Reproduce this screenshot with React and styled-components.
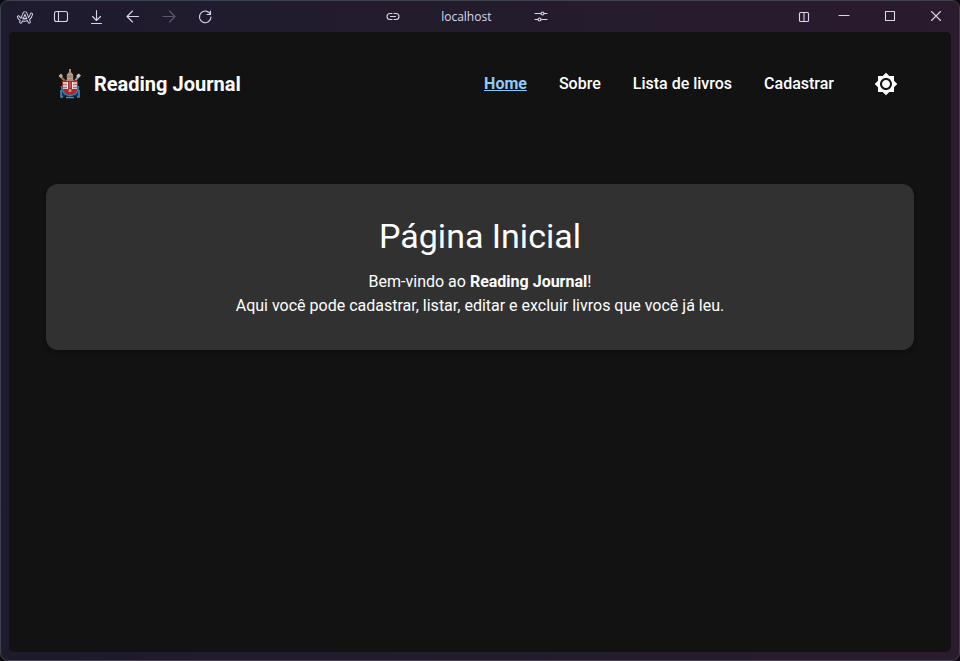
import React from "react";
import styled, { createGlobalStyle, css } from "styled-components";

const GlobalStyle = createGlobalStyle`
  *, *::before, *::after { box-sizing: border-box; }
  body {
    margin: 0;
    background: #0b0b10;
    color: #fff;
    font-family: Roboto, "Liberation Sans", sans-serif;
    font-size: 16px;
    line-height: 24px;
  }
`;

const BrowserWindow = styled.div`
  min-height: 100vh;
  display: flex;
  flex-direction: column;
  border: 1px solid #3c434d;
  border-radius: 8px;
  background: linear-gradient(90deg, #1e1b2e 0%, #231c2d 50%, #2a1b2d 100%);
`;

const TitleBar = styled.div`
  display: grid;
  grid-template-columns: 11fr 184px 12fr;
  align-items: center;
  height: 31px;
  padding-left: 6px;
`;

const Tools = styled.div`
  display: flex;
  align-items: center;
  justify-content: ${({ $align }) => $align || "flex-start"};
`;

const ChromeButton = styled.button`
  display: flex;
  align-items: center;
  justify-content: center;
  width: ${({ $wide }) => ($wide ? "46px" : "36px")};
  height: 30px;
  padding: 0;
  border: 0;
  background: none;
  color: ${({ disabled }) => (disabled ? "#5d596f" : "#d9d4f0")};
`;

const ChromeIcon = styled.svg`
  display: block;
  width: 16px;
  height: 16px;
  fill: none;
  stroke: currentColor;
  stroke-width: 1.1;
  stroke-linecap: round;
  stroke-linejoin: round;
`;

const MenuIcon = styled(ChromeIcon)`
  width: 18px;
  height: 16px;
`;

const Address = styled.span`
  color: #dcd8ec;
  font-family: "Open Sans", "Noto Sans", sans-serif;
  font-size: 12px;
  line-height: 16px;
`;

const Page = styled.div`
  flex: 1;
  margin: 0 8px 8px;
  padding: 32px 37px;
  border-radius: 5px;
  background: #121212;
`;

const Header = styled.header`
  display: flex;
  align-items: center;
  justify-content: space-between;
  padding: 0 8px;
  margin-bottom: 80px;
`;

const Brand = styled.div`
  display: flex;
  align-items: center;
  gap: 8px;
  font-size: 20px;
  font-weight: 700;
  line-height: 32px;
`;

const Crest = styled.svg`
  display: block;
  width: 32px;
  height: 32px;
`;

const Nav = styled.nav`
  display: flex;
  align-items: center;
  gap: 32px;
`;

const NavLink = styled.a`
  color: #fff;
  font-weight: 500;
  text-decoration: none;
  ${({ $active }) =>
    $active &&
    css`
      color: #90caf9;
      font-weight: 700;
      text-decoration: underline;
    `}
`;

const ThemeButton = styled.button`
  display: flex;
  padding: 8px;
  border: 0;
  border-radius: 50%;
  background: none;
  color: #fff;
`;

const ThemeIcon = styled.svg`
  width: 24px;
  height: 24px;
  fill: currentColor;
`;

const Card = styled.main`
  padding: 32px;
  border-radius: 12px;
  background: #313131;
  box-shadow: 0 2px 4px rgba(0, 0, 0, 0.3);
  text-align: center;
`;

const Title = styled.h1`
  margin: 0 0 14px;
  font-size: 34px;
  font-weight: 400;
  line-height: 40px;
`;

const Text = styled.p`
  margin: 0;
`;

const links = ["Home", "Sobre", "Lista de livros", "Cadastrar"];

function Glyph({ children }) {
  return (
    <ChromeIcon viewBox="0 0 16 16" aria-hidden="true">
      {children}
    </ChromeIcon>
  );
}

function ArcLogo() {
  const swoosh = "M2.500 8c1 2.300 3.300 3.200 6 3.200 3.500 0 6-2 7-6";
  const letter = "M4.800 13L8.300 4h1.400l3.500 9";
  return (
    <MenuIcon viewBox="0 0 18 16" aria-hidden="true">
      <path d={letter} strokeWidth="3.200" />
      <path d={swoosh} strokeWidth="3.200" />
      <path d={letter} stroke="#1f1b2e" strokeWidth="1.300" />
      <path d={swoosh} stroke="#1f1b2e" strokeWidth="1.300" />
      <path d="M6.500 9c1.300.6 3 .7 4.500.2" strokeWidth="1" />
    </MenuIcon>
  );
}

function Logo() {
  return (
    <Crest viewBox="0 0 32 32" aria-hidden="true">
      <path d="M8 18l-2 7 1 4h3l2-2h8l2 2h3l1-4-2-7" fill="#183853" />
      <path d="M6 8l6 6" stroke="#96775e" strokeWidth="2" />
      <path d="M25 8l-5 6" stroke="#9c9c9c" strokeWidth="2" />
      <path d="M4.500 8L7 5.500 9 8 7 10z" fill="#cfaa8a" />
      <path d="M22 8L24.500 5.500 27 7.500 24.500 10z" fill="#c7c7c7" />
      <path d="M8 13c4-2 12-2 16 0v7c0 4-3 7-8 7s-8-3-8-7z" fill="#a9282d" />
      <path d="M9 14h4v7H9zM19 14h4v7h-4z" fill="#cfc6c3" />
      <path d="M9 16.500h4M19 16.500h4M9 19.500h4M19 19.500h4" stroke="#a57673" strokeWidth="1" />
      <path d="M13.500 14v7M18.500 14v7" stroke="#f2ebe7" strokeWidth="1" />
      <path d="M14 14h4v7h-4z" fill="#a92b30" />
      <path d="M16 14v6" stroke="#cf8277" strokeWidth="1" />
      <circle cx="16" cy="22.500" r="1.500" fill="#c4a58b" />
      <path d="M7.500 18c0 5 3 9.500 8.500 9.500s8.500-4.500 8.500-9.500" fill="none" stroke="#3d7eb5" strokeWidth="1.500" />
      <path d="M7 22v7h2M25 22v7h-2M12 29.500h8" fill="none" stroke="#4c8bbf" strokeWidth="1.500" />
      <path d="M12 13l1-2c-1-3 0-5 2-7V1h2v3c2 2 3 4 2 7l1 2z" fill="#a38b77" />
      <path d="M13 6.500h6M13 10.500h6" stroke="#c4a789" strokeWidth="1" />
    </Crest>
  );
}

export default function App() {
  return (
    <>
      <GlobalStyle />
      <BrowserWindow>
        <TitleBar>
          <Tools>
            <ChromeButton aria-label="Menu">
              <ArcLogo />
            </ChromeButton>
            <ChromeButton aria-label="Barra lateral">
              <Glyph>
                <rect x="1.500" y="2.500" width="13" height="10" rx="2" />
                <path d="M5.500 2.500v10" />
              </Glyph>
            </ChromeButton>
            <ChromeButton aria-label="Downloads">
              <Glyph>
                <path d="M7.500 1.500v10M3.500 7.500l4 4 4-4M2.500 14.500h10" />
              </Glyph>
            </ChromeButton>
            <ChromeButton aria-label="Voltar">
              <Glyph>
                <path d="M13.500 7.500H2M7.500 2L2 7.500 7.500 13" />
              </Glyph>
            </ChromeButton>
            <ChromeButton aria-label="Avançar" disabled>
              <Glyph>
                <path d="M2 7.500h12M8.500 2L14 7.500 8.500 13" />
              </Glyph>
            </ChromeButton>
            <ChromeButton aria-label="Recarregar">
              <Glyph>
                <path d="M13.500 5.500A5.800 5.800 0 1 0 14 8M13.500 2v3.500H10" />
              </Glyph>
            </ChromeButton>
          </Tools>
          <Tools $align="space-between">
            <ChromeButton aria-label="Copiar link">
              <Glyph>
                <path d="M8 4.500H6a3 3 0 0 0 0 6h2M10 4.500h2a3 3 0 0 1 0 6h-2M6.500 7.500h5" />
              </Glyph>
            </ChromeButton>
            <Address>localhost</Address>
            <ChromeButton aria-label="Configurações do site">
              <Glyph>
                <path d="M3 4.500h6M12 4.500h3M3 10.500h3M9 10.500h6" />
                <circle cx="10.500" cy="4.500" r="1.500" />
                <circle cx="7.500" cy="10.500" r="1.500" />
              </Glyph>
            </ChromeButton>
          </Tools>
          <Tools $align="flex-end">
            <ChromeButton aria-label="Dividir tela">
              <Glyph>
                <rect x="4.500" y="3.500" width="9" height="9" rx="1" />
                <path d="M9 3.500v9" />
              </Glyph>
            </ChromeButton>
            <ChromeButton aria-label="Minimizar" $wide>
              <Glyph>
                <path d="M3 6.500h10" />
              </Glyph>
            </ChromeButton>
            <ChromeButton aria-label="Maximizar" $wide>
              <Glyph>
                <rect x="3.500" y="2.500" width="9" height="9" />
              </Glyph>
            </ChromeButton>
            <ChromeButton aria-label="Fechar" $wide>
              <Glyph>
                <path d="M3.500 2.500l9 9M12.500 2.500l-9 9" />
              </Glyph>
            </ChromeButton>
          </Tools>
        </TitleBar>
        <Page>
          <Header>
            <Brand>
              <Logo />
              <span>Reading Journal</span>
            </Brand>
            <Nav aria-label="Principal">
              {links.map((label, index) => (
                <NavLink href="#" key={label} $active={index === 0}>
                  {label}
                </NavLink>
              ))}
              <ThemeButton aria-label="Alternar tema">
                <ThemeIcon viewBox="0 0 24 24" aria-hidden="true">
                  <path d="M20 8.690V4h-4.690L12 .690 8.690 4H4v4.690L.690 12 4 15.310V20h4.690L12 23.310 15.310 20H20v-4.690L23.310 12 20 8.690zM12 18c-3.310 0-6-2.690-6-6s2.690-6 6-6 6 2.690 6 6-2.690 6-6 6zm0-10c-2.210 0-4 1.790-4 4s1.790 4 4 4 4-1.790 4-4-1.790-4-4-4z" />
                </ThemeIcon>
              </ThemeButton>
            </Nav>
          </Header>
          <Card>
            <Title>Página Inicial</Title>
            <Text>
              Bem-vindo ao <strong>Reading Journal</strong>!
            </Text>
            <Text>
              Aqui você pode cadastrar, listar, editar e excluir livros que você
              já leu.
            </Text>
          </Card>
        </Page>
      </BrowserWindow>
    </>
  );
}
